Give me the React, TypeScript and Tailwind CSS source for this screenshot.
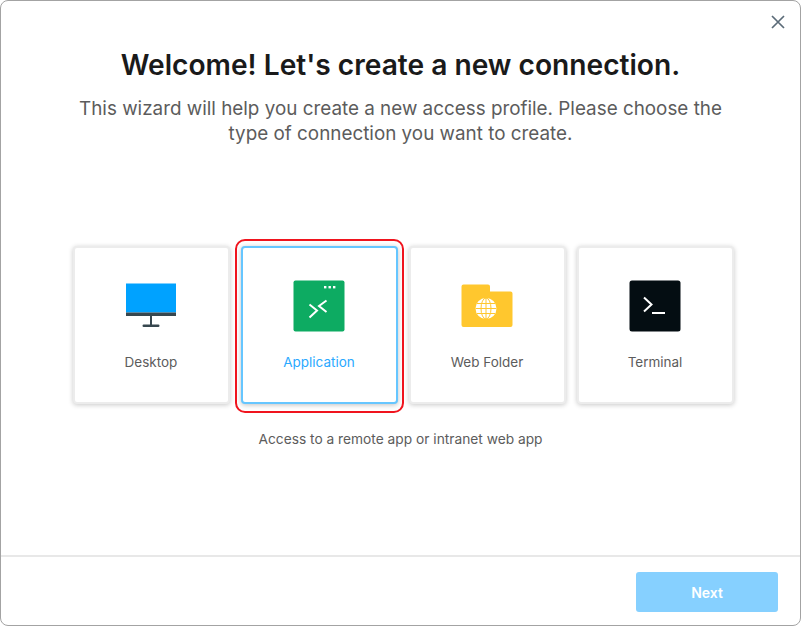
import React from "react";

const Desktop = () => (
  <svg width="52" height="46" viewBox="0 0 52 46">
    <rect x="1" y="0.5" width="50" height="29" fill="#00a2ff" />
    <rect x="1" y="29.5" width="50" height="3.5" fill="#37474f" />
    <rect x="25" y="33" width="2" height="9" fill="#37474f" />
    <rect x="17.5" y="41.5" width="17" height="2.5" rx="1.2" fill="#37474f" />
  </svg>
);

const Application = () => (
  <svg width="52" height="52" viewBox="0 0 52 52">
    <rect x="0.5" y="0.5" width="51" height="51" rx="2" fill="#0dab62" />
    <g fill="#fff">
      <rect x="31" y="6" width="2.4" height="2.4" />
      <rect x="35.5" y="6" width="2.4" height="2.4" />
      <rect x="40" y="6" width="2.4" height="2.4" />
    </g>
    <path d="M16.5 24.5 L24 30.5 L16.5 37.5 M33.5 20.5 L26 26 L33.5 32" fill="none" stroke="#fff" strokeWidth="2" />
  </svg>
);

const WebFolder = () => (
  <svg width="52" height="44" viewBox="0 0 52 44">
    <path d="M2.5 0.5 H27 a2 2 0 0 1 2 2 V7.5 H49.5 a2 2 0 0 1 2 2 V41 a2 2 0 0 1 -2 2 H2.5 a2 2 0 0 1 -2 -2 V2.5 a2 2 0 0 1 2 -2 Z" fill="#ffc72e" />
    <circle cx="25" cy="24.5" r="10.5" fill="#fff" />
    <g fill="none" stroke="#ffc72e" strokeWidth="1">
      <ellipse cx="25" cy="24.5" rx="5" ry="10.5" />
      <path d="M25 14 V35 M14.5 24.5 H35.5 M16 19.5 H34 M16 29.5 H34" />
    </g>
  </svg>
);

const Terminal = () => (
  <svg width="52" height="52" viewBox="0 0 52 52">
    <rect x="0.5" y="0.5" width="51" height="51" rx="2.5" fill="#040d12" />
    <path d="M15 17.5 L22.5 24.5 L15 31.5" fill="none" stroke="#fff" strokeWidth="2" />
    <rect x="23" y="32" width="13" height="2" fill="#fff" />
  </svg>
);

function Card({ label, icon, active }: { label: string; icon: React.ReactNode; active?: boolean }) {
  return (
    <div className="relative">
      <div
        className={
          active
            ? "flex h-[158px] w-[157px] flex-col items-center rounded-[4px] border-2 border-[#66c6ff] bg-white shadow-[0_1px_5px_rgba(0,0,0,0.25)]"
            : "flex h-[158px] w-[157px] flex-col items-center rounded-[4px] border-2 border-[#ececec] bg-white shadow-[0_1px_5px_rgba(0,0,0,0.22)]"
        }
      >
        <div className="mt-[32px] flex h-[52px] items-center">{icon}</div>
        <div className={active ? "mt-[20px] text-[13.5px] leading-5 text-[#2aa9ff]" : "mt-[20px] text-[13.5px] leading-5 text-[#5c5c5c]"}>
          {label}
        </div>
      </div>
      {active && (
        <div className="pointer-events-none absolute -left-[6px] -right-[6px] -top-[7px] -bottom-[9px] rounded-[10px] border-2 border-[#f0141e]" />
      )}
    </div>
  );
}

export default function App() {
  return (
    <div className="flex h-[627px] w-[802px] bg-white font-['Inter',sans-serif]">
      <div className="relative flex h-[626px] w-[801px] flex-col rounded-[8px] border border-[#a3a3a3] bg-white">
        <button className="absolute right-[14px] top-[13px] text-[#5b6b78]">
          <svg width="16" height="16" viewBox="0 0 16 16" className="block">
            <path d="M2 2 L14 14 M14 2 L2 14" fill="none" stroke="currentColor" strokeWidth="1.7" />
          </svg>
        </button>
        <div className="flex flex-1 flex-col items-center">
          <h1 className="mt-[45px] text-[28.15px] font-semibold leading-[38px] text-[#1a1a1a]">
            Welcome! Let's create a new connection.
          </h1>
          <p className="mt-[12px] w-[670px] text-center text-[18.85px] leading-[25px] text-[#5c5c5c]">
            This wizard will help you create a new access profile. Please choose the type of connection you want to create.
          </p>
          <div className="ml-[5px] mt-[100px] flex gap-[11px]">
            <Card label="Desktop" icon={<Desktop />} />
            <Card label="Application" icon={<Application />} active />
            <Card label="Web Folder" icon={<WebFolder />} />
            <Card label="Terminal" icon={<Terminal />} />
          </div>
          <p className="mt-[25px] text-[13.75px] leading-5 text-[#5c5c5c]">Access to a remote app or intranet web app</p>
        </div>
        <div className="flex h-[70px] items-start justify-end border-t-2 border-[#e8e8e8] pr-[22px] pt-[15px]">
          <button className="h-[40px] w-[142px] rounded-[3px] bg-[#86d0ff] text-[14px] font-semibold text-white">Next</button>
        </div>
      </div>
    </div>
  );
}
